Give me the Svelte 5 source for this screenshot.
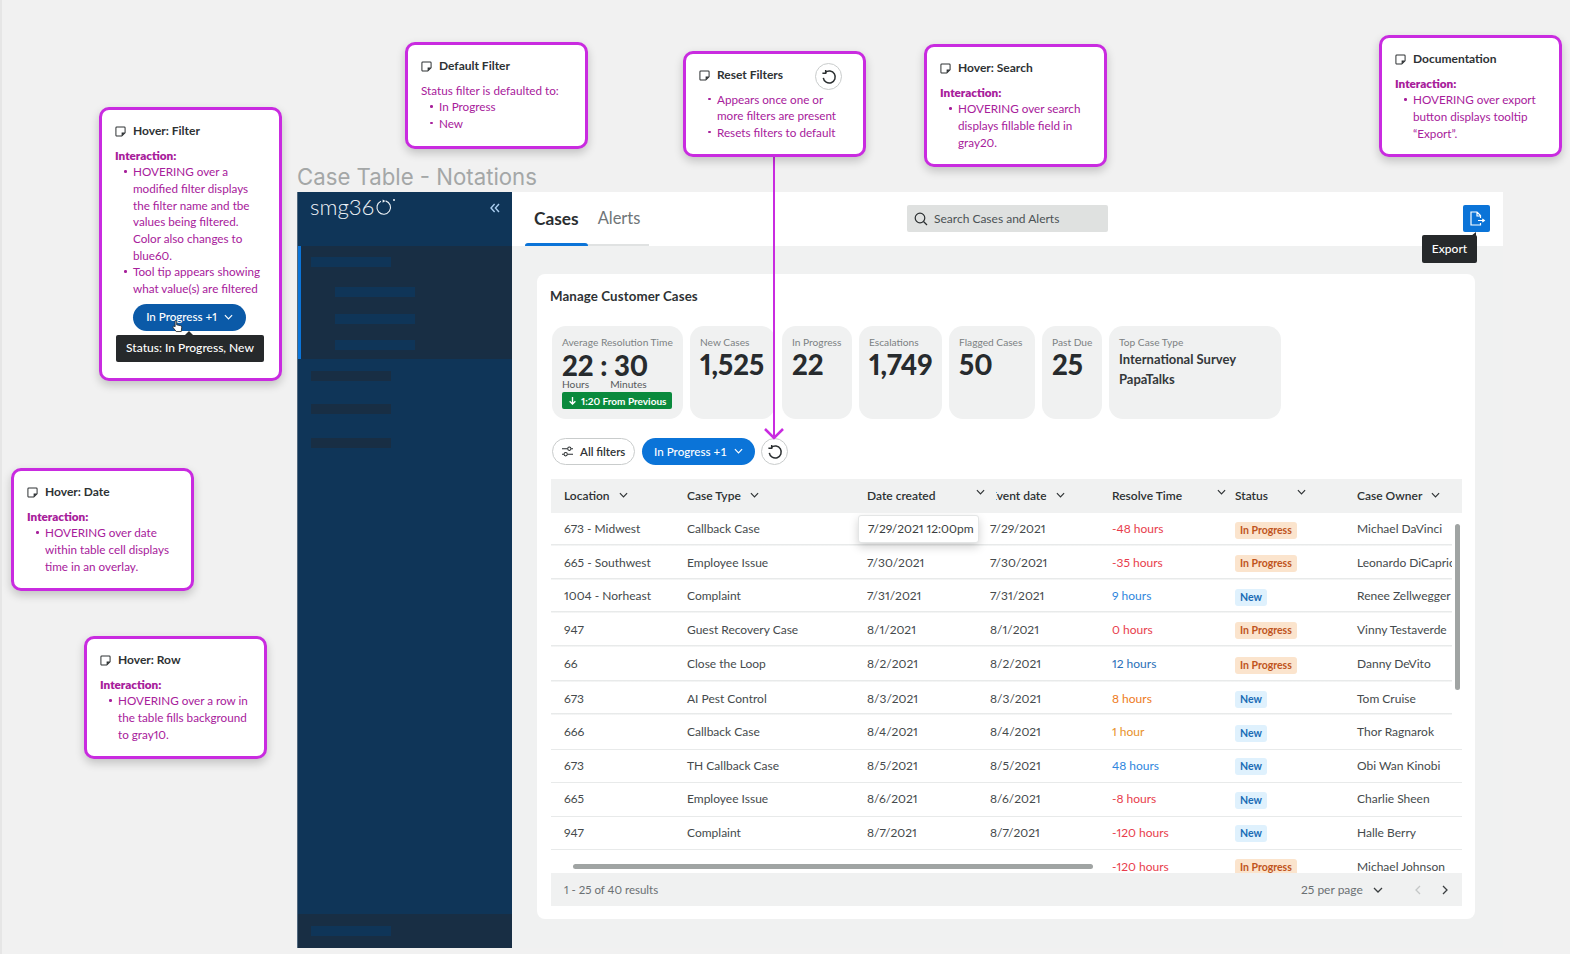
<script>
  const notes = [
    { cls: 'n-filter', title: 'Hover: Filter', lead: 'Interaction:', items: ['HOVERING over a modified filter displays the filter name and tbe values being filtered. Color also changes to blue60.', 'Tool tip appears showing what value(s) are filtered'], demo: true },
    { cls: 'n-default', title: 'Default Filter', plain: 'Status filter is defaulted to:', items: ['In Progress', 'New'] },
    { cls: 'n-reset', title: 'Reset Filters', items: ['Appears once one or more filters are present', 'Resets filters to default'], reset: true },
    { cls: 'n-search', title: 'Hover: Search', lead: 'Interaction:', items: ['HOVERING over search displays fillable field in gray20.'] },
    { cls: 'n-doc', title: 'Documentation', lead: 'Interaction:', items: ['HOVERING over export button displays tooltip “Export”.'] },
    { cls: 'n-date', title: 'Hover: Date', lead: 'Interaction:', items: ['HOVERING over date within table cell displays time in an overlay.'] },
    { cls: 'n-row', title: 'Hover: Row', lead: 'Interaction:', items: ['HOVERING over a row in the table fills background to gray10.'] }
  ];
  const kpis = [
    { label: 'New Cases', value: '1,525', w: 85 },
    { label: 'In Progress', value: '22', w: 70 },
    { label: 'Escalations', value: '1,749', w: 83 },
    { label: 'Flagged Cases', value: '50', w: 86 },
    { label: 'Past Due', value: '25', w: 60 }
  ];
  const heads = [
    { t: 'Location', cls: '' }, { t: 'Case Type', cls: '' }, { t: 'Date created', cls: 'wide' },
    { t: 'Event date', cls: 'clip' }, { t: 'Resolve Time', cls: 'wide' }, { t: 'Status', cls: 'wide' }, { t: 'Case Owner', cls: '' }
  ];
  const rows = [
    ['673 - Midwest', 'Callback Case', '7/29/2021', '7/29/2021', '-48 hours', 'red', 'In Progress', 'Michael DaVinci'],
    ['665 - Southwest', 'Employee Issue', '7/30/2021', '7/30/2021', '-35 hours', 'red', 'In Progress', 'Leonardo DiCaprio'],
    ['1004 - Norheast', 'Complaint', '7/31/2021', '7/31/2021', '9 hours', 'sky', 'New', 'Renee Zellwegger'],
    ['947', 'Guest Recovery Case', '8/1/2021', '8/1/2021', '0 hours', 'red', 'In Progress', 'Vinny Testaverde'],
    ['66', 'Close the Loop', '8/2/2021', '8/2/2021', '12 hours', 'blue', 'In Progress', 'Danny DeVito'],
    ['673', 'AI Pest Control', '8/3/2021', '8/3/2021', '8 hours', 'orange', 'New', 'Tom Cruise'],
    ['666', 'Callback Case', '8/4/2021', '8/4/2021', '1 hour', 'amber', 'New', 'Thor Ragnarok'],
    ['673', 'TH Callback Case', '8/5/2021', '8/5/2021', '48 hours', 'sky', 'New', 'Obi Wan Kinobi'],
    ['665', 'Employee Issue', '8/6/2021', '8/6/2021', '-8 hours', 'red', 'New', 'Charlie Sheen'],
    ['947', 'Complaint', '8/7/2021', '8/7/2021', '-120 hours', 'red', 'New', 'Halle Berry'],
    ['', '', '', '', '-120 hours', 'red', 'In Progress', 'Michael Johnson']
  ];
</script>

{#snippet chevron(cls = '')}
  <svg class="chev {cls}" viewBox="0 0 10 6" aria-hidden="true"><path d="M1 1l4 4 4-4" /></svg>
{/snippet}

{#snippet resetIcon()}
  <svg class="reset-ico" viewBox="0 0 16 16" aria-hidden="true">
    <path d="M4.2 3.6A6 6 0 1 1 2.3 8.9" />
    <path d="M4.7 1v3.3H1.4" />
  </svg>
{/snippet}

{#snippet noteIcon()}
  <svg class="note-ico" viewBox="0 0 12 12" aria-hidden="true">
    <path d="M7.4 11H2a1 1 0 0 1-1-1V2a1 1 0 0 1 1-1h8a1 1 0 0 1 1 1v5.4L7.4 11z" />
    <path class="solid" d="M7.2 7.2H11L7.2 11z" />
  </svg>
{/snippet}

<div class="stage">
  <div class="edge"></div>
  <h1 class="frame-title">Case Table - Notations</h1>

  <div class="frame">
    <aside class="side">
      <div class="brand">
        <div class="logo">smg36<svg class="logo-o" viewBox="0 0 20 20" aria-hidden="true"><path d="M12.5 2.200A8 8 0 1 1 7 2.600" /><path class="tip" d="M9 .5l3.200 1.800L9 4.400z" /></svg><i></i></div>
        <svg class="collapse" viewBox="0 0 10 10" aria-hidden="true"><path d="M4.600 1L1 5l3.600 4M9 1L5.400 5 9 9" /></svg>
      </div>
      <div class="active-group">
        <span class="bar"></span>
        <span class="bar child first"></span>
        <span class="bar child"></span>
        <span class="bar child"></span>
      </div>
      <div class="items">
        <span class="bar dark"></span>
        <span class="bar dark"></span>
        <span class="bar dark"></span>
      </div>
      <div class="side-foot"><span class="bar"></span></div>
    </aside>

    <div class="main">
      <header class="top">
        <nav class="tabs">
          <span class="tab on">Cases</span>
          <span class="tab alt">Alerts</span>
        </nav>
        <div class="search">
          <svg viewBox="0 0 14 14" aria-hidden="true"><circle cx="6" cy="6" r="4.8" /><path d="M9.500 9.500L13 13" /></svg>
          <span>Search Cases and Alerts</span>
        </div>
        <button class="export" aria-label="Export">
          <svg viewBox="0 0 18 18" aria-hidden="true"><path d="M12.500 13v2H3V2h6l3.500 3.500V8M9 2v4h3.500" /><path d="M10 10.500h6M14.300 9l2 1.500-2 1.500" /></svg>
        </button>
        <div class="tip-export">Export</div>
      </header>

      <div class="content">
        <section class="card">
          <h2>Manage Customer Cases</h2>
          <div class="kpis">
            <div class="kpi avg">
              <div class="k-label">Average Resolution Time</div>
              <div class="k-value">22 : 30</div>
              <div class="k-units"><span>Hours</span><span>Minutes</span></div>
              <div class="k-badge">
                <svg viewBox="0 0 10 10" aria-hidden="true"><path d="M5 1v8M1.800 5.800L5 9l3.200-3.200" /></svg>
                1:20 From Previous
              </div>
            </div>
            {#each kpis as k}
              <div class="kpi" style="width:{k.w}px">
                <div class="k-label">{k.label}</div>
                <div class="k-value">{k.value}</div>
              </div>
            {/each}
            <div class="kpi top-type">
              <div class="k-label">Top Case Type</div>
              <div class="k-name">International Survey</div>
              <div class="k-name">PapaTalks</div>
            </div>
          </div>

          <div class="filters">
            <button class="all">
              <svg viewBox="0 0 14 12" aria-hidden="true"><path d="M1 3h6M11 3h2M1 9h2M7 9h6" /><circle cx="9" cy="3" r="1.800" /><circle cx="5" cy="9" r="1.800" /></svg>
              All filters
            </button>
            <button class="pill">In Progress +1 {@render chevron()}</button>
            <button class="circle">{@render resetIcon()}</button>
          </div>

          <div class="table">
            <div class="row head">
              {#each heads as h}
                <div class="cell {h.cls}"><span class="h-text">{h.t}</span>{@render chevron()}</div>
              {/each}
            </div>
            <div class="tbody">
              {#each rows as r, i}
                <div class="row" class:tall={i === 4} class:short={i < 6} class:last={i === 10}>
                  <div class="cell">{r[0]}</div>
                  <div class="cell">{r[1]}</div>
                  <div class="cell">
                    {#if i === 0}<div class="date-tip">7/29/2021 12:00pm</div>{:else}{r[2]}{/if}
                  </div>
                  <div class="cell">{r[3]}</div>
                  <div class="cell {r[5]}">{r[4]}</div>
                  <div class="cell b"><span class="badge" class:new={r[6] === 'New'}>{r[6]}</span></div>
                  <div class="cell owner">{r[7]}</div>
                </div>
              {/each}
              <div class="vscroll"></div>
              <div class="hscroll"></div>
            </div>
            <div class="tfoot">
              <span class="count">1 - 25 of 40 results</span>
              <span class="per">25 per page</span>
              {@render chevron('per-c')}
              <svg class="page off" viewBox="0 0 6 10" aria-hidden="true"><path d="M5 1L1 5l4 4" /></svg>
              <svg class="page" viewBox="0 0 6 10" aria-hidden="true"><path d="M1 1l4 4-4 4" /></svg>
            </div>
          </div>
        </section>
      </div>
    </div>
  </div>

  <svg class="connector" viewBox="0 0 30 290" aria-hidden="true">
    <path d="M15 0V281" />
    <path class="head-a" d="M6 272l9 9 9-9" />
  </svg>

  {#each notes as n}
    <article class="note {n.cls}">
      <div class="n-title">{@render noteIcon()}<span>{n.title}</span></div>
      {#if n.reset}<span class="circle n-circle">{@render resetIcon()}</span>{/if}
      {#if n.lead}<div class="n-lead">{n.lead}</div>{/if}
      {#if n.plain}<div class="n-plain">{n.plain}</div>{/if}
      <ul>
        {#each n.items as it}<li>{it}</li>{/each}
      </ul>
      {#if n.demo}
        <div class="demo">
          <span class="pill dark-pill">In Progress +1 {@render chevron()}</span>
          <svg class="hand" viewBox="0 0 12 14" aria-hidden="true"><path d="M3.400 7.200V1.600c0-1.200 1.700-1.200 1.700 0v3.600l4.300.9c.9.2 1.300.9 1.200 1.800l-.5 4.600H4.600L1.200 8.200c-.7-.9.4-2 1.300-1.300z" /></svg>
          <div class="tip-status">Status: In Progress, New</div>
        </div>
      {/if}
    </article>
  {/each}
</div>

<style>
  :global(body) { margin: 0; background: #f1f1f1; }
  .stage {
    position: relative; width: 1570px; height: 954px; overflow: hidden;
    background: #f1f1f1; font-family: Lato, "Open Sans", sans-serif; font-size: 12px; color: #454a4c;
    font-variant-numeric: proportional-nums;
  }
  .edge { position: absolute; left: 0; top: 0; bottom: 0; width: 2px; background: #e6e6e6; }
  .frame-title {
    position: absolute; left: 297px; top: 162px; margin: 0; height: 30px; line-height: 30px;
    font-family: Inter, sans-serif; font-size: 22.2px; font-weight: 400; color: #a4a7a7;
  }
  .frame { position: absolute; left: 297px; top: 192px; width: 1206px; height: 756px; display: flex; background: #f0f1f1; }

  .side { width: 215px; flex: none; background: #0f3558; display: flex; flex-direction: column; border-left: 1px solid #51687e; box-sizing: border-box; }
  .brand { height: 54px; display: flex; align-items: flex-start; padding: 0 12px 0 12px; justify-content: space-between; flex: none; }
  .logo { display: flex; align-items: center; color: #eef3f7; font-family: Lato, sans-serif; font-weight: 300; font-size: 22.3px; height: 30px; line-height: 30px; }
  .logo i { width: 2px; height: 2px; border-radius: 50%; background: #eef3f7; margin: -15px 0 0 1px; }
  .logo-o { width: 17px; height: 17px; fill: none; stroke: #eef3f7; stroke-width: 1.3; margin: 0 0 0 .5px; }
  .logo-o .tip { fill: #eef3f7; stroke: none; }
  .collapse { width: 10px; height: 10px; fill: none; stroke: #a9cdef; stroke-width: 1.4; margin-top: 11px; }
  .bar { display: block; width: 80px; height: 10px; background: #0f3558; }
  .active-group { height: 113px; flex: none; box-sizing: border-box; background: #182e44; border-left: 3px solid #0b74d8; padding: 11px 0 0 10px; }
  .child { margin-left: 24px; margin-top: 16.5px; }
  .first { margin-top: 20px; }
  .items { flex: 1; padding: 11.5px 0 0 13px; display: flex; flex-direction: column; gap: 23.5px; }
  .dark { background: #182e44; }
  .side-foot { height: 34px; flex: none; background: #182e44; padding: 12px 0 0 13px; box-sizing: border-box; }

  .main { flex: 1; min-width: 0; display: flex; flex-direction: column; }
  .top { height: 54px; flex: none; background: #fff; position: relative; display: flex; align-items: flex-start; }
  .tabs { display: flex; height: 54px; margin-left: 13px; width: 124px; flex: none; position: relative; border-bottom: 2px solid #e0e2e2; box-sizing: border-box; }
  .tab { font-size: 16.500px; line-height: 53px; height: 52px; color: #6f7577; margin-left: 9px; margin-right: 9px; }
  .tab.on { font-size: 17.300px; color: #2a2e30; font-weight: 700; position: relative; }
  .tab.alt { margin-left: 10px; }
  .tab.on::after { content: ''; position: absolute; left: -9px; right: -9px; bottom: -2px; height: 3px; background: #0b74d8; border-radius: 3px 3px 0 0; }
  .search { margin: 13px 0 0 258px; width: 201px; height: 27px; flex: none; background: #dfe1e0; border-radius: 2px; display: flex; align-items: center; gap: 6px; padding-left: 7px; box-sizing: border-box; font-size: 12px; color: #4c5255; }
  .search svg { width: 14px; height: 14px; fill: none; stroke: #2a2e30; stroke-width: 1.2; }
  .export { margin: 13px 0 0 355px; width: 27px; height: 27px; flex: none; padding: 0; border: 0; background: #0b74d8; border-radius: 2px; display: flex; align-items: center; justify-content: center; }
  .export svg { width: 18px; height: 18px; fill: none; stroke: #fff; stroke-width: 1.2; }
  .tip-export { position: absolute; left: 910px; top: 43px; width: 55px; height: 28px; line-height: 27px; text-align: center; background: #26292b; color: #fff; border-radius: 2px; font-size: 12px; z-index: 3; font-weight: 500; }
  .tip-export::after { content: ''; position: absolute; right: 1px; top: -3px; border-left: 5px solid transparent; border-bottom: 4px solid #26292b; }

  .content { padding: 28px 0 0 25px; }
  .card { width: 938px; height: 645px; box-sizing: border-box; background: #fff; border-radius: 8px; padding: 13px 13px 0 14px; display: flex; flex-direction: column; }
  h2 { margin: 0 0 0 -1px; font-size: 13.3px; line-height: 18px; font-weight: 700; color: #2e3234; letter-spacing: .1px; }
  .kpis { display: flex; gap: 7px; margin: 21px 0 0 1px; }
  .kpi { height: 93px; box-sizing: border-box; background: #f0f1f1; border-radius: 14px; padding: 9px 0 0 10px; flex: none; }
  .avg { width: 131px; }
  .top-type { width: 172px; }
  .k-label { font-size: 10.2px; line-height: 14px; color: #7c8183; white-space: nowrap; }
  .k-value { font-size: 27.5px; line-height: 32px; font-weight: 900; color: #272b2e; white-space: nowrap; }
  .avg .k-value { line-height: 27px; margin-top: 2.5px; }
  .k-units { display: flex; gap: 21px; font-size: 10.2px; line-height: 10px; color: #56595b; }
  .k-badge { display: flex; align-items: center; gap: 4px; width: 110px; height: 17px; margin-top: 3.5px; box-sizing: border-box; padding-left: 6px; border-radius: 2px; background: #0a8a3d; color: #fff; font-size: 10px; font-weight: 700; white-space: nowrap; }
  .k-badge svg { width: 9px; height: 9px; fill: none; stroke: #fff; stroke-width: 1.5; }
  .k-name { font-size: 13px; line-height: 20px; font-weight: 700; color: #34383a; }

  .filters { display: flex; align-items: center; gap: 6px; margin: 18px 0 0 1px; height: 29px; }
  button { font-family: inherit; cursor: default; }
  .all { width: 83px; height: 27px; flex: none; border: 1px solid #c9cccc; background: #fff; border-radius: 14px; display: flex; align-items: center; gap: 6px; padding: 0 0 0 8px; font-size: 11.5px; font-weight: 600; color: #2f3335; margin-right: 1px; }
  .all svg { width: 13px; height: 11px; fill: none; stroke: #2a2e30; stroke-width: 1.1; }
  .pill { width: 113px; height: 27px; flex: none; box-sizing: border-box; border: 0; background: #0b74d8; border-radius: 14px; color: #fff; font-size: 11.6px; font-weight: 500; display: flex; align-items: center; gap: 7px; justify-content: center; padding: 0; margin-top: -1px; }
  .pill .chev { stroke: #fff; }
  .circle { width: 27px; height: 27px; flex: none; box-sizing: border-box; border: 1px solid #c9cccc; border-radius: 50%; background: #fff; padding: 0; display: flex; align-items: center; justify-content: center; }
  .reset-ico { width: 16px; height: 16px; fill: none; stroke: #2a2e30; stroke-width: 1.5; }
  .chev { width: 9px; height: 6px; flex: none; fill: none; stroke: #2f3335; stroke-width: 1.3; }

  .table { margin-top: 13px; width: 911px; display: flex; flex-direction: column; }
  .row { display: grid; grid-template-columns: 123px 180px 123px 122px 123px 122px 118px; height: 33.6px; box-sizing: border-box; border-bottom: 1.5px solid #e8eaea; align-items: center; }
  .row.short { border-bottom-color: transparent; background: linear-gradient(#e8eaea, #e8eaea) 0 100% / 901px 1.5px no-repeat; }
  .row.tall { height: 35px; }
  .row.last { border: 0; height: 33.5px; }
  .cell { padding: 0 0 1px 13px; white-space: nowrap; position: relative; min-width: 0; }
  .cell.b { padding: 1.5px 0 0 13px; display: flex; }
  .owner { padding-left: 13px; overflow: hidden; width: 95px; box-sizing: content-box; }
  .head { height: 34px; background: #f0f1f1; border: 0; font-weight: 600; color: #2d3133; flex: none; }
  .head .cell { display: flex; align-items: center; gap: 9px; padding-bottom: 2px; }
  .head .wide .chev { position: absolute; top: 0; }
  .head .cell:nth-child(3) .chev { left: 122px; top: 1px; }
  .head .cell:nth-child(5) .chev { left: 118px; top: 1px; }
  .head .cell:nth-child(6) .chev { left: 75px; top: 1px; }
  .clip .h-text { clip-path: inset(0 0 0 6px); }
  .tbody { height: 360px; overflow: hidden; position: relative; flex: none; }
  .red { color: #e83d4c; } .sky { color: #2f86dd; } .blue { color: #2a6fb8; } .orange { color: #ee7b22; } .amber { color: #e8912a; }
  .badge { display: inline-block; height: 17px; line-height: 17px; padding: 0 5px; border-radius: 3px; background: #fbe4cd; color: #c0541c; font-weight: 700; font-size: 10.5px; }
  .badge.new { background: #dff1fd; color: #1a6bb5; }
  .date-tip { position: absolute; left: 4px; top: -14px; width: 121px; height: 28px; line-height: 26px; box-sizing: border-box; padding-left: 9px; background: #fff; border: 1px solid #e4e6e6; border-radius: 3px; box-shadow: 0 4px 10px rgba(0,0,0,.18); color: #3a3e40; z-index: 2; }
  .vscroll { position: absolute; right: 2px; top: 11px; width: 5px; height: 166px; border-radius: 3px; background: #a0a4a3; }
  .hscroll { position: absolute; left: 22px; top: 351px; width: 520px; height: 5px; border-radius: 3px; background: #a0a4a3; }
  .tfoot { height: 33px; flex: none; background: #f0f1f1; display: flex; align-items: center; color: #6b7073; padding-left: 13px; font-size: 11.5px; }
  .count { width: 737px; }
  .per { width: 72px; font-size: 12px; }
  .per-c { width: 10px; stroke: #3a3e40; }
  .page { width: 6px; height: 10px; fill: none; stroke: #3a3e40; stroke-width: 1.3; margin-left: 32px; }
  .page + .page { margin-left: 21px; }
  .page.off { stroke: #c4c7c7; }

  .connector { position: absolute; left: 759px; top: 157px; width: 30px; height: 290px; fill: none; stroke: #c92be0; stroke-width: 2; z-index: 4; }
  .connector .head-a { stroke-width: 2.5; }

  .note { position: absolute; width: 183px; box-sizing: border-box; background: #fff; border: 3px solid #c92be0; border-radius: 10px; padding: 13px 14px 0 13px; box-shadow: 0 4px 10px rgba(0,0,0,.2); color: #a7209b; font-size: 11.7px; line-height: 16.7px; z-index: 5; }
  .n-filter { left: 99px; top: 107px; height: 274px; }
  .n-default { left: 405px; top: 42px; height: 107px; }
  .n-reset { left: 683px; top: 51px; height: 106px; }
  .n-search { left: 924px; top: 44px; height: 123px; }
  .n-doc { left: 1379px; top: 35px; height: 122px; }
  .n-date { left: 11px; top: 468px; height: 123px; }
  .n-row { left: 84px; top: 636px; height: 123px; }
  .n-title { display: flex; align-items: center; gap: 7px; font-size: 12px; font-weight: 700; color: #2e3234; height: 16px; margin-bottom: 7.5px; }
  .note-ico { width: 11px; height: 11px; flex: none; fill: none; stroke: #2e3234; stroke-width: 1.1; }
  .note-ico .solid { fill: #2e3234; stroke: none; }
  .n-lead { font-weight: 800; }
  .note ul { margin: 0; padding: 0 0 0 18px; list-style: none; }
  .note li { position: relative; }
  .note li::before { content: ''; position: absolute; left: -9px; top: 7px; width: 2.5px; height: 2.5px; background: #a7209b; border-radius: 50%; }
  .n-circle { position: absolute; right: 21px; top: 9px; }
  .demo { position: relative; height: 60px; margin: 7px 0 0 0; width: 160px; }
  .dark-pill { position: absolute; left: 18px; top: 0; background: #0b5aa8; margin: 0; }
  .hand { position: absolute; left: 57px; top: 16px; width: 11px; height: 13px; fill: #fff; stroke: #222; stroke-width: .9; }
  .tip-status { position: absolute; left: 1px; top: 31px; width: 148px; height: 27px; line-height: 26px; text-align: center; background: #26292b; color: #fff; border-radius: 2px; font-size: 12px; font-weight: 500; }
  .tip-status::before { content: ''; position: absolute; left: 69px; top: -4px; border: 4px solid transparent; border-top: 0; border-bottom-color: #26292b; }
</style>
